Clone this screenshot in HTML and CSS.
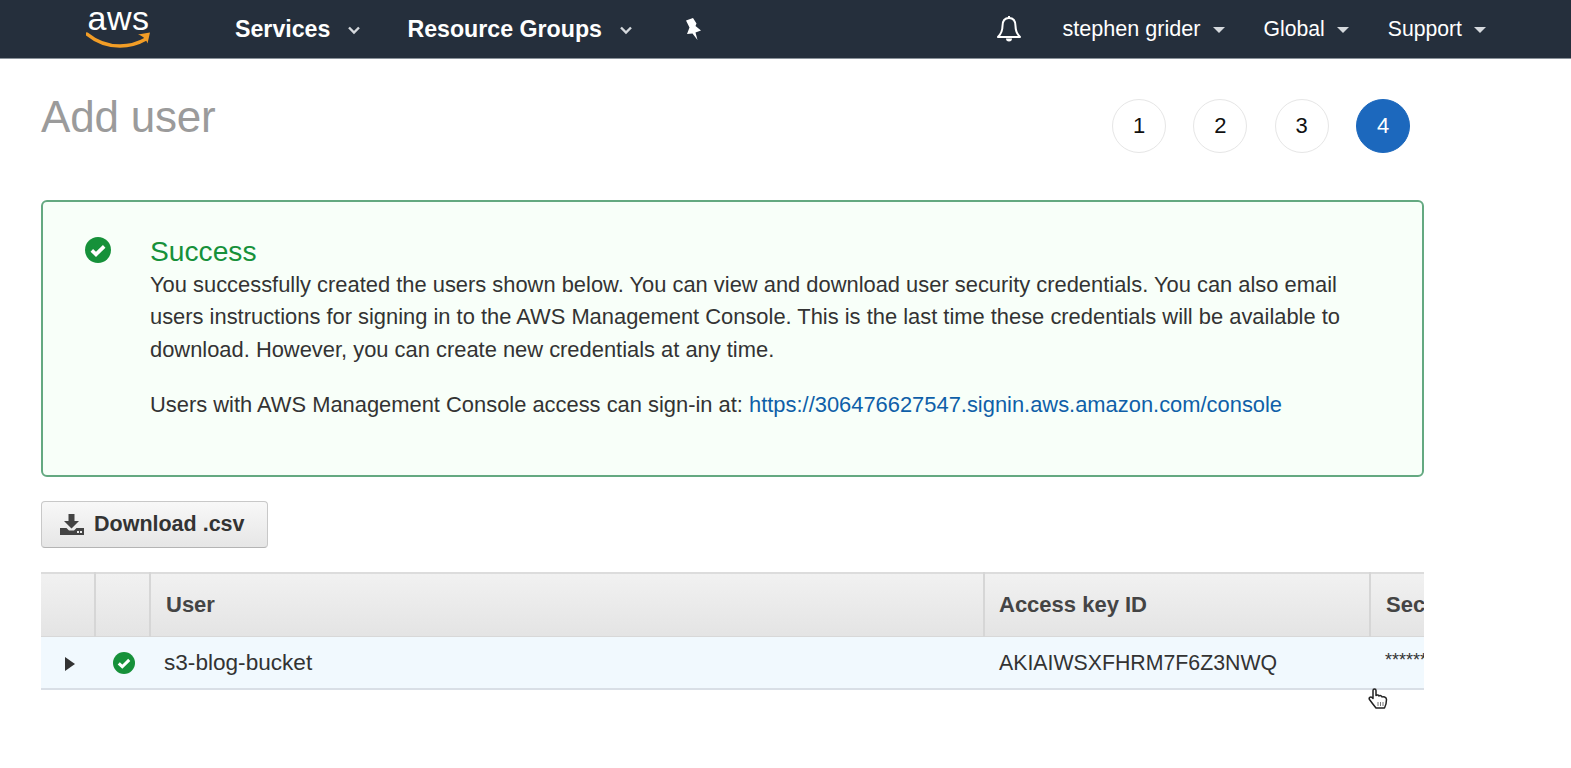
FILE: index.html
```html
<!DOCTYPE html>
<html lang="en">
<head>
<meta charset="utf-8">
<title>Add user</title>
<link rel="stylesheet" href="styles.css">
</head>
<body>
<nav class="nav">
  <a class="logo">
    <span class="logo-word">aws</span>
    <svg class="logo-smile" width="66" height="18" viewBox="0 0 66 18"><path d="M1 3C12 12 24 15 34 15C44 15 53 12 60 8" fill="none" stroke="#f29d26" stroke-width="3.4" stroke-linecap="round"/><path d="M52 3.5L64 1.5L61.5 12.5C60.5 9 58 5.5 52 3.5Z" fill="#f29d26"/></svg>
  </a>
  <div class="nav-main">
    <span class="nav-strong">Services</span>
    <svg class="chev" width="14" height="9" viewBox="0 0 14 9"><path d="M2 1.5L7 6.5L12 1.5" fill="none" stroke="#d5d9dd" stroke-width="2.4"/></svg>
    <span class="nav-strong group-gap">Resource Groups</span>
    <svg class="chev" width="14" height="9" viewBox="0 0 14 9"><path d="M2 1.5L7 6.5L12 1.5" fill="none" stroke="#d5d9dd" stroke-width="2.4"/></svg>
    <svg class="pin" width="20" height="24" viewBox="0 0 20 24"><path d="M3 3.5L10 1L13.5 6.5L12.5 9L18 13.5L12.5 15.5L14.5 23L9.5 16.5L4 17L6.5 10.5Z" fill="#fff"/></svg>
  </div>
  <div class="nav-side">
    <svg class="bell" width="26" height="28" viewBox="0 0 26 28"><path d="M13 3C8 3 6.5 7 6.5 11C6.5 16 5 19 2 22H24C21 19 19.5 16 19.5 11C19.5 7 18 3 13 3Z" fill="none" stroke="#fff" stroke-width="2" stroke-linejoin="round"/><path d="M13 1V3" stroke="#fff" stroke-width="2"/><path d="M10 23.5A3 3 0 0 0 16 23.5Z" fill="#fff"/></svg>
    <span class="nav-item user">stephen grider</span><i class="caret"></i>
    <span class="nav-item global">Global</span><i class="caret"></i>
    <span class="nav-item support">Support</span><i class="caret"></i>
  </div>
</nav>

<main class="page">
  <header class="page-head">
    <h1 class="title">Add user</h1>
    <ol class="steps">
      <li class="step">1</li>
      <li class="step">2</li>
      <li class="step">3</li>
      <li class="step step-active">4</li>
    </ol>
  </header>

  <section class="alert">
    <svg class="check check-lg" viewBox="0 0 26 26"><circle cx="13" cy="13" r="13" fill="#16913a"/><path d="M6.8 13.4L11 17.4L19.2 9.4" fill="none" stroke="#fff" stroke-width="3.6"/></svg>
    <div class="alert-body">
      <h2 class="alert-title">Success</h2>
      <p class="alert-text">You successfully created the users shown below. You can view and download user security credentials. You can also email users instructions for signing in to the AWS Management Console. This is the last time these credentials will be available to download. However, you can create new credentials at any time.</p>
      <p class="alert-link">Users with AWS Management Console access can sign-in at: <a class="link">https://306476627547.signin.aws.amazon.com/console</a></p>
    </div>
  </section>

  <button class="btn" type="button">
    <svg width="24" height="24" viewBox="0 0 24 24"><path d="M8.5 1H14.5V8H19L11.5 15.5L4 8H8.5Z" fill="#444"/><path d="M0 15H6.5L9 17.5H14L16.5 15H24V22H0Z" fill="#444"/><rect x="17" y="18" width="2" height="2" fill="#eee"/><rect x="20" y="18" width="2" height="2" fill="#eee"/></svg>
    Download .csv
  </button>

  <div class="table-wrap">
    <table class="table">
      <colgroup><col class="c1"><col class="c2"><col class="c3"><col class="c4"><col class="c5"></colgroup>
      <thead>
        <tr><th></th><th></th><th>User</th><th class="th-key">Access key ID</th><th>Secret access key</th></tr>
      </thead>
      <tbody>
        <tr>
          <td class="cell-icon"><svg width="10" height="14" viewBox="0 0 10 14"><path d="M0 0L10 7L0 14Z" fill="#333"/></svg></td>
          <td class="cell-icon"><svg class="check check-sm" viewBox="0 0 26 26"><circle cx="13" cy="13" r="13" fill="#16913a"/><path d="M6.8 13.4L11 17.4L19.2 9.4" fill="none" stroke="#fff" stroke-width="3.6"/></svg></td>
          <td class="cell-user">s3-blog-bucket</td>
          <td class="cell-key">AKIAIWSXFHRM7F6Z3NWQ</td>
          <td class="cell-secret">**********</td>
        </tr>
      </tbody>
    </table>
  </div>
</main>

<svg class="cursor" width="20" height="21" viewBox="0 0 20 21"><path d="M5 2.5C5 .6 8 .6 8 2.5V7.5C9 6.5 10.8 7 11 8C12 7.2 13.8 7.7 14 9C15 8.3 18.5 8.8 18.5 11.5C18.5 14.5 18 17 16.5 20H8C6 17.5 4 15 1.5 11.5C.5 10 2.5 8 4 9.5L5 10.5Z" fill="#fff" stroke="#222" stroke-width="1.5" stroke-linejoin="round"/><path d="M10 14V18M12.5 14V18M15 14V18" stroke="#777" stroke-width="1"/></svg>
</body>
</html>
```
FILE: styles.css
```css
* { box-sizing: border-box; }
html, body { margin: 0; padding: 0; }
body {
  position: relative;
  height: 768px;
  overflow: hidden;
  background: #fff;
  color: #333;
  font-family: "Liberation Sans", Arial, sans-serif;
}
.nav {
  display: flex;
  align-items: center;
  justify-content: space-between;
  height: 59px;
  padding-left: 87px;
  background: #252f3c;
  border-bottom: 1px solid #8a929a;
  color: #fff;
}
.logo {
  position: relative;
  display: block;
  width: 66px;
  height: 58px;
  flex: none;
}
.logo-word {
  display: block;
  padding-right: 3px;
  text-align: center;
  font-size: 34px;
  line-height: 30px;
  margin-top: 3px;
  letter-spacing: 0.5px;
}
.logo-smile { position: absolute; left: -1px; top: 31px; }
.nav-main {
  display: flex;
  align-items: center;
  flex: 1;
  padding-left: 82px;
}
.nav-strong {
  font-size: 23.2px;
  font-weight: 700;
}
.chev { margin-left: 17px; margin-top: 3px; }
.group-gap { margin-left: 46px; }
.pin { margin-left: 50px; }
.nav-side {
  display: flex;
  align-items: center;
  padding-right: 85px;
}
.nav-item { font-size: 21.2px; }
.user { margin-left: 40px; font-size: 21.6px; }
.global { margin-left: 39px; }
.support { margin-left: 39px; }
.caret {
  width: 0;
  height: 0;
  margin-left: 12px;
  margin-top: 2px;
  border-left: 6px solid transparent;
  border-right: 6px solid transparent;
  border-top: 6px solid #d5d9dd;
}
.page {
  width: 1424px;
  padding-left: 41px;
}
.page-head {
  display: flex;
  justify-content: space-between;
  height: 141px;
}
.title {
  margin: 33px 0 0;
  font-size: 44px;
  line-height: 50px;
  font-weight: 400;
  letter-spacing: -0.2px;
  color: #9b9b9b;
}
.steps {
  display: flex;
  gap: 27.3px;
  list-style: none;
  margin: 40px 14px 0 0;
  padding: 0;
}
.step {
  display: flex;
  align-items: center;
  justify-content: center;
  width: 54px;
  height: 54px;
  border: 1px solid #e6e6e6;
  border-radius: 50%;
  font-size: 22px;
  color: #111;
}
.step-active {
  background: #1c68bd;
  border-color: #1c68bd;
  color: #fff;
}
.alert {
  display: flex;
  height: 277px;
  padding: 33px 40px 0 42px;
  background: #f8fff9;
  border: 2px solid #64a981;
  border-radius: 6px;
}
.check { display: block; flex: none; }
.check-lg { width: 26px; height: 26px; margin-top: 2px; }
.check-sm { width: 22px; height: 22px; margin: 0 auto; }
.alert-body { margin-left: 39px; }
.alert-title {
  margin: 0;
  font-size: 28.2px;
  line-height: 32px;
  font-weight: 400;
  color: #16913a;
}
.alert-text {
  margin: 2px 0 0;
  font-size: 21.9px;
  line-height: 32.3px;
  color: #333;
}
.alert-link {
  margin: 23px 0 0;
  font-size: 21.9px;
  line-height: 32px;
}
.link { color: #0f5fa8; }
.btn {
  display: flex;
  align-items: center;
  gap: 10px;
  width: 227px;
  height: 47px;
  margin-top: 24px;
  padding: 0 0 0 18px;
  background: linear-gradient(#f8f8f8, #e6e6e6);
  border: 1px solid #c8c8c8;
  border-bottom-color: #b4b4b4;
  border-radius: 4px;
  font-family: inherit;
  font-size: 21.5px;
  font-weight: 700;
  color: #333;
}
.table-wrap {
  margin-top: 24px;
  overflow: hidden;
}
.table {
  table-layout: fixed;
  width: 1628px;
  border-collapse: collapse;
}
.c1 { width: 54px; }
.c2 { width: 55px; }
.c3 { width: 834px; }
.c4 { width: 386px; }
.c5 { width: 299px; }
th {
  height: 63px;
  padding: 0 15px;
  text-align: left;
  font-size: 22px;
  font-weight: 700;
  color: #444;
  background: linear-gradient(#f1f1f1, #e4e4e4);
  border-top: 2px solid #dcdcdc;
  border-right: 2px solid #d6d6d6;
  border-bottom: 1px solid #d8d8d8;
}
th.th-key { padding-left: 14px; }
td {
  height: 53px;
  padding: 2px 15px 0;
  font-size: 21.3px;
  background: #f1f9fe;
  border-bottom: 2px solid #d9dfe6;
  color: #333;
}
td.cell-icon { padding: 2px 0 0 3px; text-align: center; }
td.cell-icon svg { vertical-align: middle; }
td.cell-user { padding-left: 14px; font-size: 22.6px; }
td.cell-secret { font-size: 18px; padding-bottom: 6px; }
.cursor {
  position: absolute;
  left: 1368px;
  top: 688px;
}
```
